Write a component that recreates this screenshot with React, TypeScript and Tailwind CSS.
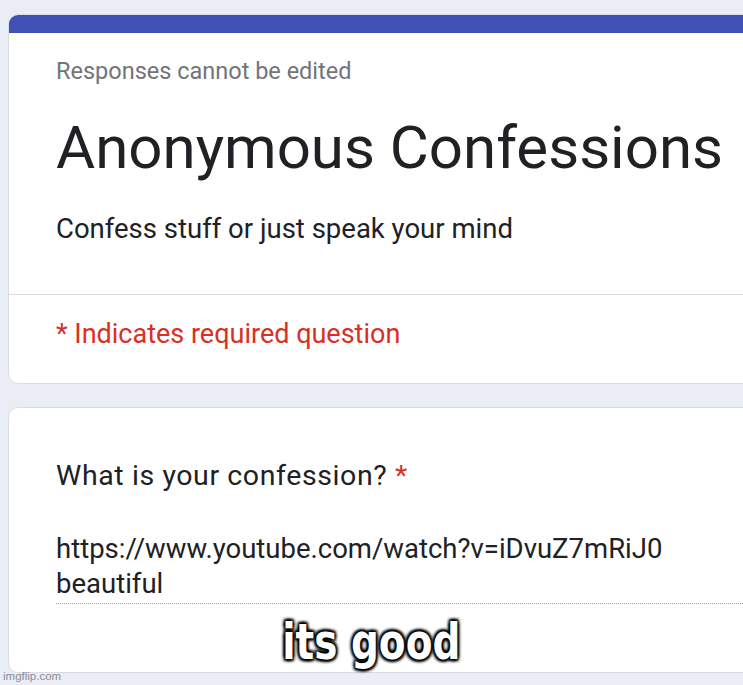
import React from "react";

export default function App() {
  return (
    <div className="relative w-[743px] h-[685px] overflow-hidden bg-[#ebedf6]" style={{ fontFamily: "Roboto, 'Liberation Sans', sans-serif" }}>
      <div className="pt-[14px] pl-[8px]">
        <div className="w-[760px] rounded-[10px] bg-white border border-[#dadce0] overflow-hidden">
          <div className="h-[18px] bg-[#3f51b5]" />
          <div className="pl-[47px] pt-[23px]">
            <div className="text-[23.5px] leading-[30px] text-[#70757a]">Responses cannot be edited</div>
            <div className="mt-[26px] text-[60px] leading-[72px] text-[#202124]">Anonymous Confessions</div>
            <div className="mt-[27px] text-[27.5px] leading-[36px] text-[#202124]">Confess stuff or just speak your mind</div>
          </div>
          <div className="mt-[47px] border-t border-[#dadce0]" />
          <div className="pl-[47px] pt-[21px] pb-[31px] text-[27px] leading-[36px] text-[#d93025]">* Indicates required question</div>
        </div>
        <div className="mt-[23px] w-[760px] h-[266px] rounded-[10px] bg-white border border-[#dadce0]">
          <div className="pl-[47px] pt-[48px]">
            <div className="text-[28.5px] leading-[40px] tracking-[0.6px] text-[#202124]">
              What is your confession? <span className="text-[#d93025]">*</span>
            </div>
            <div className="mt-[35px] text-[27.5px] leading-[35px] text-[#202124] pb-[2px] border-b border-dotted border-[#9aa0a6]">
              <div>https://www.youtube.com/watch?v=iDvuZ7mRiJ0</div>
              <div>beautiful</div>
            </div>
          </div>
        </div>
      </div>
      <div className="absolute left-0 right-0 top-[612px] flex justify-center">
        <div
          className="text-white text-[50px] leading-[60px] font-bold scale-x-[0.78]"
          style={{ fontFamily: "'DejaVu Sans', 'Liberation Sans', sans-serif", textShadow: "2px 2px 3px #000, -2px -2px 3px #000, 2px -2px 3px #000, -2px 2px 3px #000, 0 0 5px #000" }}
        >
          its good
        </div>
      </div>
      <div className="absolute left-[3px] top-[669px] text-[11.5px] leading-[14px] text-[#8a8c93]" style={{ fontFamily: "'Liberation Sans', sans-serif" }}>
        imgflip.com
      </div>
    </div>
  );
}
